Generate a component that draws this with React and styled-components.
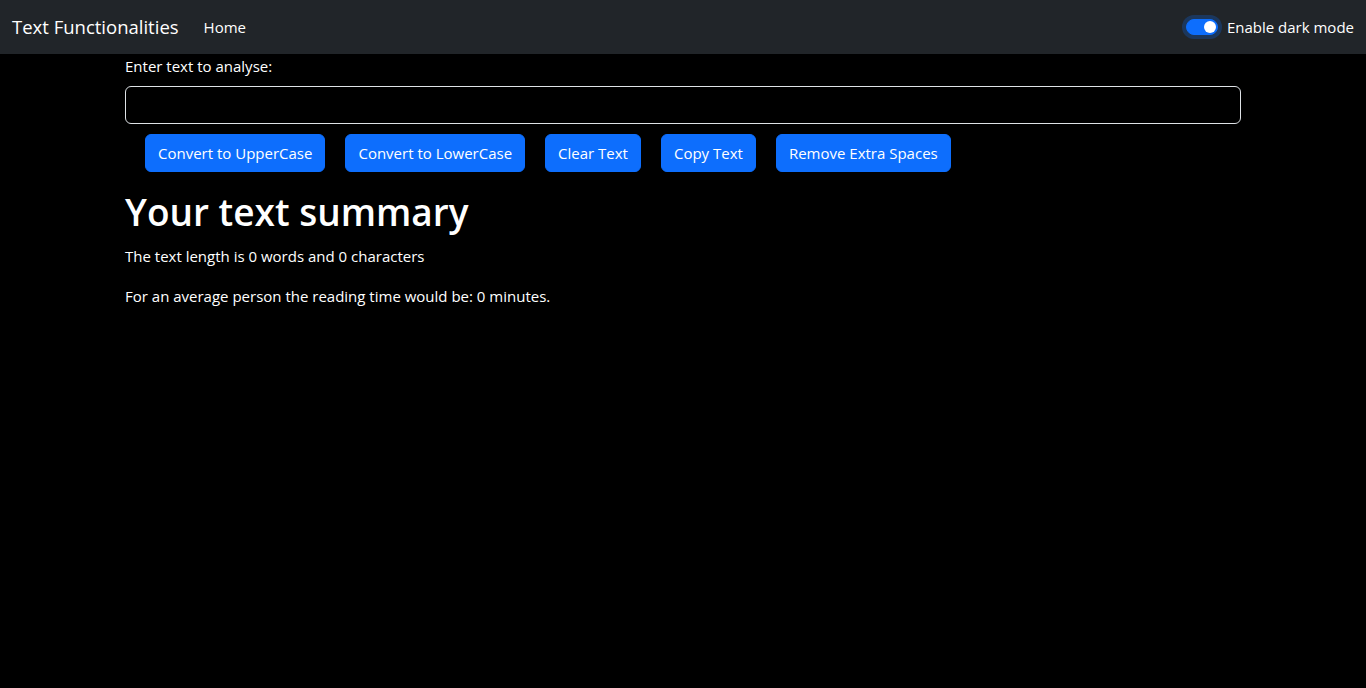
import React, { useState } from "react";
import styled, { createGlobalStyle } from "styled-components";

const GlobalStyle = createGlobalStyle`
  * { box-sizing: border-box; }
  body {
    margin: 0;
    background-color: #000;
    color: #fff;
    font-family: "Open Sans", "Noto Sans", sans-serif;
    font-size: 15px;
    line-height: 24px;
  }
`;

const Navbar = styled.nav`
  height: 54px;
  background-color: #212529;
  display: flex;
  align-items: center;
  padding: 0 12px;
`;

const Brand = styled.a`
  color: #fff;
  font-size: 18.5px;
  line-height: 30px;
  margin-right: 17px;
  text-decoration: none;
`;

const NavLink = styled.a`
  color: #fff;
  padding: 8px;
  text-decoration: none;
`;

const SwitchWrap = styled.label`
  margin-left: auto;
  display: flex;
  align-items: center;
  gap: 9px;
  cursor: pointer;
`;

const Track = styled.span`
  width: 32px;
  height: 16px;
  border-radius: 8px;
  background-color: ${(p) => (p.$on ? "#0d6efd" : "transparent")};
  border: 1px solid ${(p) => (p.$on ? "#0d6efd" : "#6c757d")};
  box-shadow: 0 0 0 4px rgba(13, 110, 253, 0.25);
  display: flex;
  align-items: center;
  justify-content: ${(p) => (p.$on ? "flex-end" : "flex-start")};
  padding: 0 1px;
  &::after {
    content: "";
    width: 12px;
    height: 12px;
    border-radius: 50%;
    background-color: #fff;
  }
`;

const Container = styled.main`
  max-width: 1140px;
  margin: 0 auto;
  padding: 0 12px;
`;

const Label = styled.label`
  display: block;
  margin-bottom: 8px;
`;

const TextArea = styled.textarea`
  display: block;
  width: 100%;
  height: 38px;
  padding: 6px 12px;
  background-color: #000;
  color: #fff;
  border: 1px solid #dee2e6;
  border-radius: 6px;
  font: inherit;
  resize: none;
  outline: none;
`;

const ButtonRow = styled.div`
  display: flex;
  gap: 20px;
  padding-left: 20px;
  margin-top: 10px;
`;

const Button = styled.button`
  height: 38px;
  padding: 6px 12px;
  background-color: #0d6efd;
  color: #fff;
  border: 1px solid #0d6efd;
  border-radius: 6px;
  font: inherit;
  cursor: pointer;
`;

const Summary = styled.section`
  margin-top: 16px;
`;

const Heading = styled.h1`
  font-size: 37px;
  line-height: 48px;
  font-weight: 600;
  margin: 0 0 8px;
`;

const Para = styled.p`
  margin: 0 0 16px;
`;

export default function App() {
  const [text, setText] = useState("");
  const [dark, setDark] = useState(true);
  const words = text.split(/\s+/).filter((w) => w.length > 0).length;

  return (
    <>
      <GlobalStyle />
      <Navbar>
        <Brand href="#">Text Functionalities</Brand>
        <NavLink href="#">Home</NavLink>
        <SwitchWrap onClick={() => setDark(!dark)}>
          <Track $on={dark} />
          Enable dark mode
        </SwitchWrap>
      </Navbar>
      <Container>
        <Label htmlFor="box">Enter text to analyse:</Label>
        <TextArea id="box" value={text} onChange={(e) => setText(e.target.value)} />
        <ButtonRow>
          <Button onClick={() => setText(text.toUpperCase())}>Convert to UpperCase</Button>
          <Button onClick={() => setText(text.toLowerCase())}>Convert to LowerCase</Button>
          <Button onClick={() => setText("")}>Clear Text</Button>
          <Button>Copy Text</Button>
          <Button onClick={() => setText(text.split(/[ ]+/).join(" "))}>Remove Extra Spaces</Button>
        </ButtonRow>
        <Summary>
          <Heading>Your text summary</Heading>
          <Para>
            The text length is {words} words and {text.length} characters
          </Para>
          <Para>
            For an average person the reading time would be: {0.008 * words} minutes.
          </Para>
        </Summary>
      </Container>
    </>
  );
}
